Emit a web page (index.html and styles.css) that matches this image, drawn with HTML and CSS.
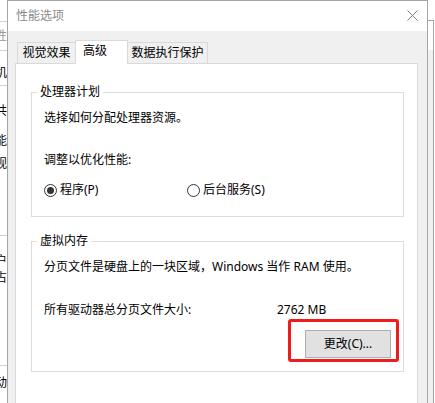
FILE: index.html
```html
<!doctype html>
<html lang="zh-CN">
<head>
  <meta charset="utf-8">
  <title>性能选项</title>
  <link rel="stylesheet" href="styles.css">
</head>
<body>

<div class="screen">

  <!-- window behind, only its right edge shows -->
  <div class="behind-left">
    <div class="bl-top"></div>
    <div class="bl-rule"></div>
    <div class="bl-row bl-title"><span>性</span></div>
    <div class="bl-rule"></div>
    <div class="bl-row bl-tab"><span>机</span></div>
    <div class="bl-rule bl-rule-tabs"></div>
    <div class="bl-row bl-r1"><span>共</span></div>
    <div class="bl-row bl-r2"><span>能</span></div>
    <div class="bl-row bl-r3"><span>视</span></div>
    <div class="bl-rule bl-rule-2"></div>
    <div class="bl-row bl-r4"><span>户</span></div>
    <div class="bl-row bl-r5"><span>占</span></div>
    <div class="bl-rule bl-rule-3"></div>
    <div class="bl-row bl-r6"><span>动</span></div>
  </div>

  <div class="dialog">
    <div class="titlebar">
      <span class="title">性能选项</span>
      <svg class="close" viewBox="0 0 11 11"><path d="M0.5 0.5L10.5 10.5M10.5 0.5L0.5 10.5" stroke="#808080" stroke-width="1" fill="none"/></svg>
    </div>

    <div class="dialog-body">
      <div class="tabs">
        <div class="tab tab-visual">视觉效果</div>
        <div class="tab tab-adv">高级</div>
        <div class="tab tab-dep">数据执行保护</div>
      </div>

      <div class="panel">
        <fieldset class="group group-cpu">
          <legend>处理器计划</legend>
          <p class="intro">选择如何分配处理器资源。</p>
          <p class="adjust">调整以优化性能:</p>
          <div class="radios">
            <label class="radio radio-programs"><span class="radio-dot checked"></span>程序(P)</label>
            <label class="radio"><span class="radio-dot"></span>后台服务(S)</label>
          </div>
        </fieldset>

        <fieldset class="group group-vm">
          <legend>虚拟内存</legend>
          <p class="intro">分页文件是硬盘上的一块区域，Windows 当作 RAM 使用。</p>
          <div class="size-row">
            <span class="size-label">所有驱动器总分页文件大小:</span>
            <span>2762 MB</span>
          </div>
          <div class="btn-row">
            <button class="btn" type="button">更改(C)...</button>
            <span class="highlight"></span>
          </div>
        </fieldset>
      </div>
    </div>
  </div>

  <!-- another dialog stacked behind -->
  <div class="behind-right"></div>

</div>

</body>
</html>
```

FILE: styles.css
```css
html, body {
  margin: 0;
  padding: 0;
  overflow: hidden;
}

.screen {
  display: flex;
  width: 435px;
  height: 403px;
  overflow: hidden;
  background: #fff;
  color: #000;
  font-family: "Noto Sans", "Noto Sans CJK SC", sans-serif;
  font-size: 12px;
}

/* Left: clipped window in the background */

.behind-left {
  flex: none;
  width: 7px;
  overflow: hidden;
}

.bl-top {
  height: 21px;
}

.bl-rule {
  height: 1px;
  background: #d0d0d0;
}

.bl-row {
  display: flex;
  justify-content: flex-end;
  height: 16px;
  line-height: 16px;
  white-space: nowrap;
}

.bl-title {
  height: 28px;
  line-height: 28px;
  color: #9a9a9a;
}

.bl-tab { margin: 14px 0 4px; }
.bl-r1 { margin-top: 17px; }
.bl-r2 { margin-top: 14px; }
.bl-r3 { margin-top: 7px; }
.bl-rule-2 { margin-top: 63px; }
.bl-r4 { margin-top: 17px; }
.bl-r5 { margin-top: 1px; }
.bl-rule-3 { margin-top: 79px; }
.bl-r6 { margin-top: 9px; }

/* The dialog */

.dialog {
  flex: none;
  display: flex;
  flex-direction: column;
  width: 421px;
  height: 430px;
  box-sizing: border-box;
  border: 1px solid #a6a6a6;
  background: #f0f0f0;
}

.titlebar {
  display: flex;
  align-items: center;
  justify-content: space-between;
  height: 30px;
  box-sizing: border-box;
  padding: 0 9px 1px 8px;
  background: #fff;
}

.title {
  color: #8a8a8a;
  line-height: 16px;
}

.close {
  width: 11px;
  height: 11px;
}

.dialog-body {
  flex: 1;
  display: flex;
  flex-direction: column;
  padding: 9px 9px 0 7px;
}

/* Tabs */

.tabs {
  display: flex;
  align-items: flex-end;
  padding-left: 2px;
  position: relative;
  z-index: 1;
}

.tab {
  height: 21px;
  box-sizing: border-box;
  border: 1px solid #d9d9d9;
  border-bottom: 0;
  background: #f0f0f0;
  line-height: 20px;
  white-space: nowrap;
}

.tab-visual {
  width: 59px;
  text-align: center;
}

.tab-adv {
  width: 53px;
  height: 24px;
  margin: 0 -1px -1px;
  padding-left: 7px;
  background: #fff;
  position: relative;
  z-index: 1;
}

.tab-dep {
  width: 81px;
  text-align: center;
}

.panel {
  flex: 1;
  padding: 20px 0 0 15px;
  border: 1px solid #d9d9d9;
  background: #fff;
}

/* Group boxes */

.group {
  width: 373px;
  min-width: 0;
  box-sizing: border-box;
  margin: 0;
  padding: 0 12px 13px;
  border: 1px solid #dcdcdc;
}

.group legend {
  margin-left: -7px;
  padding: 0 3px;
  line-height: 16px;
}

.group-cpu {
  padding-bottom: 18px;
}

.group-vm {
  margin-top: 16px;
}

.group p {
  margin: 0;
  line-height: 16px;
}

.intro {
  margin-top: 10px !important;
}

.adjust {
  margin-top: 26px !important;
}

.radios {
  display: flex;
  margin-top: 14px;
  line-height: 16px;
}

.radio {
  display: flex;
  align-items: center;
}

.radio-programs {
  width: 143px;
}

.radio-dot {
  display: flex;
  align-items: center;
  justify-content: center;
  width: 13px;
  height: 13px;
  box-sizing: border-box;
  margin-right: 3px;
  border: 1px solid #333;
  border-radius: 50%;
  background: #fff;
}

.radio-dot.checked::after {
  content: "";
  width: 7px;
  height: 7px;
  border-radius: 50%;
  background: #333;
}

.size-row {
  display: flex;
  margin-top: 27px;
  line-height: 16px;
}

.size-label {
  width: 233px;
}

.btn-row {
  display: flex;
  justify-content: flex-end;
  margin-top: 12px;
  position: relative;
}

.btn {
  width: 86px;
  height: 28px;
  padding: 0;
  border: 1px solid #adadad;
  background: #e1e1e1;
  color: #000;
  font: inherit;
  line-height: 16px;
}

/* red annotation drawn over the button */
.highlight {
  position: absolute;
  top: -11px;
  right: -8px;
  width: 111px;
  height: 43px;
  box-sizing: border-box;
  border: 3px solid #ee1c1c;
  border-radius: 3px;
}

/* Right: edge of the window behind */

.behind-right {
  flex: none;
  align-self: flex-start;
  width: 6px;
  height: 400px;
  box-sizing: border-box;
  margin-top: 20px;
  border-top: 1px solid #a6a6a6;
  border-right: 1px solid #a6a6a6;
  background: linear-gradient(#fff 29px, #f0f0f0 29px);
}
```
